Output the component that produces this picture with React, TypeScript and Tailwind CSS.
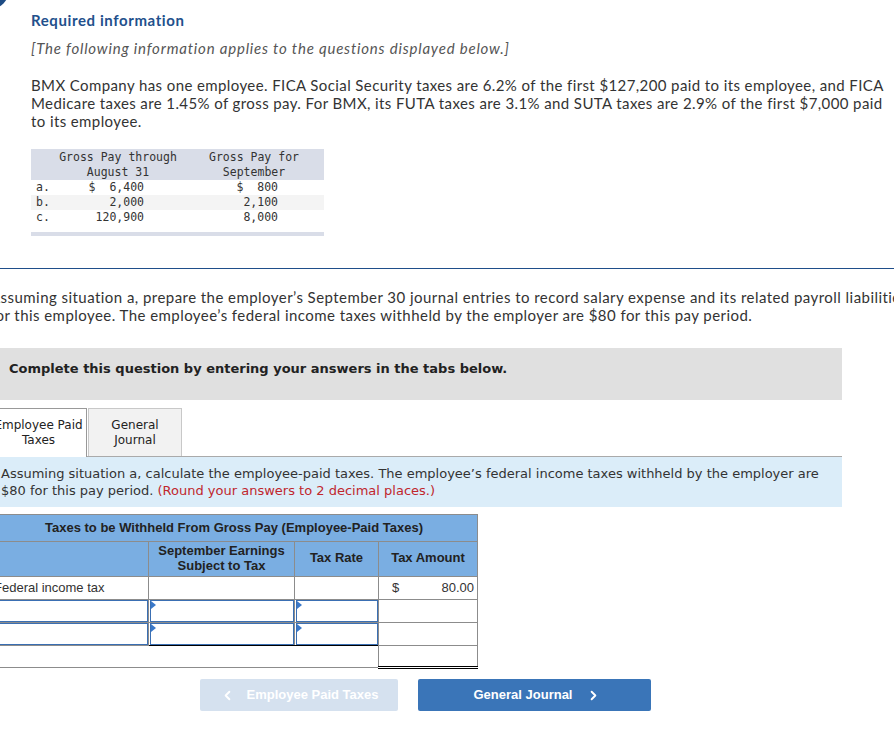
import { ChevronLeft, ChevronRight } from "lucide-react";

const prox = { fontFamily: "Lato, 'Open Sans', sans-serif" };

function InputCell({ arrow = false }: { arrow?: boolean }) {
  return (
    <div className="relative h-[22px] w-full border border-[#3a6fb3]">
      {arrow && (
        <div className="absolute left-0 top-0 h-0 w-0 border-y-[4px] border-l-[5px] border-y-transparent border-l-[#3a78c9]" />
      )}
    </div>
  );
}

export default function App() {
  return (
    <div className="relative h-[732px] w-[894px] overflow-hidden bg-white text-[#333]">
      {/* corner badge */}
      <div className="absolute left-[-29px] top-[-29px] h-[38px] w-[38px] rounded-full bg-[#1e4c84]" />

      {/* Required info */}
      <div className="pl-[31px] pt-[11px]" style={prox}>
        <div className="text-[15px] font-bold leading-[18px] tracking-[0.6px] text-[#22508c]">Required information</div>
        <div className="mt-[10px] text-[15px] italic leading-[18px] tracking-[0.8px] text-[#555]">
          [The following information applies to the questions displayed below.]
        </div>
        <div className="mt-[19px] whitespace-nowrap text-[15px] leading-[18px] tracking-[0.4px]">
          <div>BMX Company has one employee. FICA Social Security taxes are 6.2% of the first $127,200 paid to its employee, and FICA</div>
          <div>Medicare taxes are 1.45% of gross pay. For BMX, its FUTA taxes are 3.1% and SUTA taxes are 2.9% of the first $7,000 paid</div>
          <div>to its employee.</div>
        </div>

        {/* data table */}
        <div className="mt-[19px] w-[293px] text-[11.5px] leading-[15px] text-[#333]" style={{ fontFamily: "'DejaVu Sans Mono', 'Liberation Mono', monospace" }}>
          <div className="flex h-[31px] items-center bg-[#d9dde8]">
            <div className="w-[28px] shrink-0" />
            <div className="w-[118px] shrink-0 text-center">Gross Pay through<br />August 31</div>
            <div className="w-[154px] shrink-0 text-center">Gross Pay for<br />September</div>
          </div>
          {[
            ["a.", "$  6,400", "$  800", ""],
            ["b.", "2,000", "2,100", "bg-[#f4f4f4]"],
            ["c.", "120,900", "8,000", ""],
          ].map(([l, a, b, bg]) => (
            <div key={l} className={`flex h-[15px] items-center whitespace-pre ${bg}`}>
              <div className="w-[28px] shrink-0 pl-[5px]">{l}</div>
              <div className="w-[118px] shrink-0 pr-[33px] text-right">{a}</div>
              <div className="w-[154px] shrink-0 pr-[53px] text-right">{b}</div>
            </div>
          ))}
          <div className="mt-[7px] h-[4px] bg-[#d9dde8]" />
        </div>
      </div>

      <div className="mt-[32px] h-[1px] w-full bg-[#1f4e8a]" />

      <div className="ml-[-10px]">
        <div className="mt-[19px] whitespace-nowrap text-[15px] leading-[18px] tracking-[0.45px]" style={prox}>
          <div>Assuming situation a, prepare the employer’s September 30 journal entries to record salary expense and its related payroll liabilities</div>
          <div>for this employee. The employee’s federal income taxes withheld by the employer are $80 for this pay period.</div>
        </div>

        <div className="mt-[24px] h-[52px] w-[852px] bg-[#e0e0e0] pl-[19px] pt-[12px]" style={{ fontFamily: "'DejaVu Sans', Verdana, sans-serif" }}>
          <div className="text-[13px] font-bold leading-[17px] text-[#222]">Complete this question by entering your answers in the tabs below.</div>
        </div>

        {/* tabs */}
        <div className="mt-[8px] flex w-[852px] border-b border-[#aaa] text-[12px] leading-[15px] text-[#222]" style={{ fontFamily: "'DejaVu Sans', Verdana, sans-serif" }}>
          <div className="mb-[-1px] flex h-[49px] w-[97px] items-center justify-center border border-b-0 border-[#999] bg-white text-center">
            Employee Paid<br />Taxes
          </div>
          <div className="ml-[1px] flex h-[48px] w-[94px] items-center justify-center border border-b-0 border-[#c8c8c8] bg-[#f2f2f2] text-center">
            General<br />Journal
          </div>
        </div>

        <div className="h-[50px] w-[852px] whitespace-nowrap bg-[#dbedf9] pl-[11px] pt-[8px] text-[13px] leading-[17px] text-[#333]" style={{ fontFamily: "'DejaVu Sans', Verdana, sans-serif" }}>
          <div>Assuming situation a, calculate the employee-paid taxes. The employee’s federal income taxes withheld by the employer are</div>
          <div>
            $80 for this pay period. <span className="text-[#c0272d]">(Round your answers to 2 decimal places.)</span>
          </div>
        </div>

        {/* withholding table */}
        <table className="mt-[7px] border-collapse text-[13px] text-[#333]" style={{ fontFamily: "'Liberation Sans', Arial, sans-serif" }}>
          <colgroup>
            <col className="w-[158px]" />
            <col className="w-[146px]" />
            <col className="w-[84px]" />
            <col className="w-[99px]" />
          </colgroup>
          <tbody>
            <tr className="h-[27px] bg-[#7aaee2]">
              <td colSpan={4} className="border border-[#8c8c8c] text-center font-bold text-[#222]">
                Taxes to be Withheld From Gross Pay (Employee-Paid Taxes)
              </td>
            </tr>
            <tr className="h-[35px] bg-[#7aaee2] font-bold leading-[15px] text-[#222]">
              <td className="border border-[#8c8c8c]" />
              <td className="border border-[#8c8c8c] pb-[3px] text-center">September Earnings<br />Subject to Tax</td>
              <td className="border border-[#8c8c8c] pb-[3px] text-center">Tax Rate</td>
              <td className="border border-[#8c8c8c] pb-[3px] text-center">Tax Amount</td>
            </tr>
            <tr className="h-[23px]">
              <td className="border border-[#8c8c8c] pl-[3px]">Federal income tax</td>
              <td className="border border-[#8c8c8c]" />
              <td className="border border-[#8c8c8c]" />
              <td className="border border-[#8c8c8c] px-[3px]">
                <div className="flex justify-between pl-[10px]">
                  <span>$</span>
                  <span>80.00</span>
                </div>
              </td>
            </tr>
            {[0, 1].map((i) => (
              <tr key={i} className="h-[23px]">
                <td className="border border-[#8c8c8c] p-0"><InputCell /></td>
                <td className={`border border-[#8c8c8c] p-0 pl-[1px] ${i === 1 ? "border-b-black" : ""}`}><InputCell arrow /></td>
                <td className={`border border-[#8c8c8c] p-0 pl-[1px] ${i === 1 ? "border-b-black" : ""}`}><InputCell arrow /></td>
                <td className={`border border-[#8c8c8c] ${i === 1 ? "border-b-black" : ""}`} />
              </tr>
            ))}
            <tr className="h-[22px]">
              <td colSpan={3} className="border border-[#8c8c8c]" />
              <td className="border border-[#8c8c8c] border-b-[3px] border-b-black border-double" />
            </tr>
          </tbody>
        </table>

        {/* nav buttons */}
        <div className="mt-[10px] flex gap-[20px] pl-[210px] text-[13px] font-bold text-white" style={{ fontFamily: "'Liberation Sans', Arial, sans-serif" }}>
          <div className="flex h-[32px] w-[198px] items-center justify-center gap-[12px] rounded-[2px] bg-[#d5e1ef]">
            <ChevronLeft className="h-[15px] w-[15px]" strokeWidth={3} />
            <span>Employee Paid Taxes</span>
          </div>
          <div className="flex h-[32px] w-[233px] items-center justify-center gap-[14px] rounded-[2px] bg-[#3a75b8] pl-[6px]">
            <span>General Journal</span>
            <ChevronRight className="h-[15px] w-[15px]" strokeWidth={3} />
          </div>
        </div>
      </div>
    </div>
  );
}
